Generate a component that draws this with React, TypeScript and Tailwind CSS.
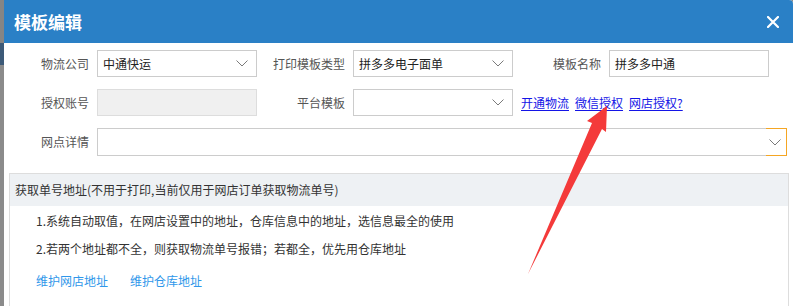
import React from "react";

const FONT = { fontFamily: '"Noto Sans CJK SC", "Noto Sans", sans-serif' };

function Chevron() {
  return (
    <svg width="12" height="7" viewBox="0 0 12 7" className="shrink-0">
      <polyline points="0.5,0.5 6,6 11.5,0.5" fill="none" stroke="#7a7a7a" strokeWidth="1" />
    </svg>
  );
}

function Label({ w, children }: { w: string; children: React.ReactNode }) {
  return (
    <div className={`${w} shrink-0 pr-2 text-right text-[12px] text-[#555]`}>{children}</div>
  );
}

function Select({ value }: { value?: string }) {
  return (
    <div className="flex h-[27px] w-[160px] shrink-0 items-center justify-between border border-[#ccc] bg-white pl-[5px] pr-[8px] text-[12px] text-[#222]">
      <span>{value ?? ""}</span>
      <Chevron />
    </div>
  );
}

export default function App() {
  return (
    <div className="relative flex h-[306px] w-[793px] overflow-hidden bg-[#8a8a8a]" style={FONT}>
      <div className="flex w-[4px] shrink-0 flex-col">
        <div className="h-[43px] bg-[#858585]" />
        <div className="h-[22px] bg-[#3d5a78]" />
        <div className="flex-1 bg-[#8b8b8b]" />
      </div>
      <div className="flex flex-1 flex-col overflow-hidden rounded-tr-[4px] bg-white">
        <div className="flex h-[43px] shrink-0 items-center justify-between bg-[#2a80c6] pl-[10px] pr-[14px]">
          <span className="text-[17px] font-semibold text-white">模板编辑</span>
          <svg width="12" height="12" viewBox="0 0 12 12">
            <path d="M1 1 L11 11 M11 1 L1 11" stroke="white" strokeWidth="2.2" strokeLinecap="round" />
          </svg>
        </div>

        <div className="flex shrink-0 flex-col pt-[7px]">
          <div className="flex h-[27px] items-center">
            <Label w="w-[93px]">物流公司</Label>
            <Select value="中通快运" />
            <Label w="w-[96px]">打印模板类型</Label>
            <Select value="拼多多电子面单" />
            <Label w="w-[96px]">模板名称</Label>
            <div className="flex h-[27px] w-[160px] items-center border border-[#ccc] pl-[5px] text-[12px] text-[#222]">
              拼多多中通
            </div>
          </div>

          <div className="mt-[12px] flex h-[27px] items-center">
            <Label w="w-[93px]">授权账号</Label>
            <div className="h-[27px] w-[160px] shrink-0 border border-[#ddd] bg-[#f0f0f0]" />
            <Label w="w-[96px]">平台模板</Label>
            <Select />
            <div className="ml-[8px] flex gap-[6px] text-[12px] text-[#1414e6]">
              <span className="underline underline-offset-2">开通物流</span>
              <span className="underline underline-offset-2">微信授权</span>
              <span className="underline underline-offset-2">网店授权?</span>
            </div>
          </div>

          <div className="mt-[12px] flex h-[28px] items-center">
            <Label w="w-[93px]">网点详情</Label>
            <div className="flex h-[28px] w-[690px] shrink-0">
              <div className="flex-1 border-y border-l border-[#ccc] bg-white" />
              <div className="flex w-[21px] items-center justify-center border-y border-r border-[#f5a623] pr-[2px]">
                <Chevron />
              </div>
            </div>
          </div>
        </div>

        <div className="ml-[5px] mt-[17px] h-[160px] w-[780px] shrink-0 border border-[#ddd]">
          <div className="flex h-[32px] items-center bg-[#eef1f4] pl-[5px] text-[12px] text-[#333]">
            获取单号地址(不用于打印,当前仅用于网店订单获取物流单号)
          </div>
          <div className="flex flex-col pl-[26px] text-[12px] text-[#333]">
            <div className="mt-[5px] h-[20px] leading-[20px]">1.系统自动取值，在网店设置中的地址，仓库信息中的地址，选信息最全的使用</div>
            <div className="mt-[8px] h-[20px] leading-[20px]">2.若两个地址都不全，则获取物流单号报错；若都全，优先用仓库地址</div>
            <div className="mt-[12px] flex h-[20px] gap-[22px] leading-[20px] text-[#2f97ea]">
              <span>维护网店地址</span>
              <span>维护仓库地址</span>
            </div>
          </div>
        </div>
      </div>

      <svg className="pointer-events-none absolute left-0 top-0" width="793" height="306" viewBox="0 0 793 306">
        <polygon points="607,106 606,132 602,129 528,274 592,123 587,121" fill="#f43a3a" />
      </svg>
    </div>
  );
}
